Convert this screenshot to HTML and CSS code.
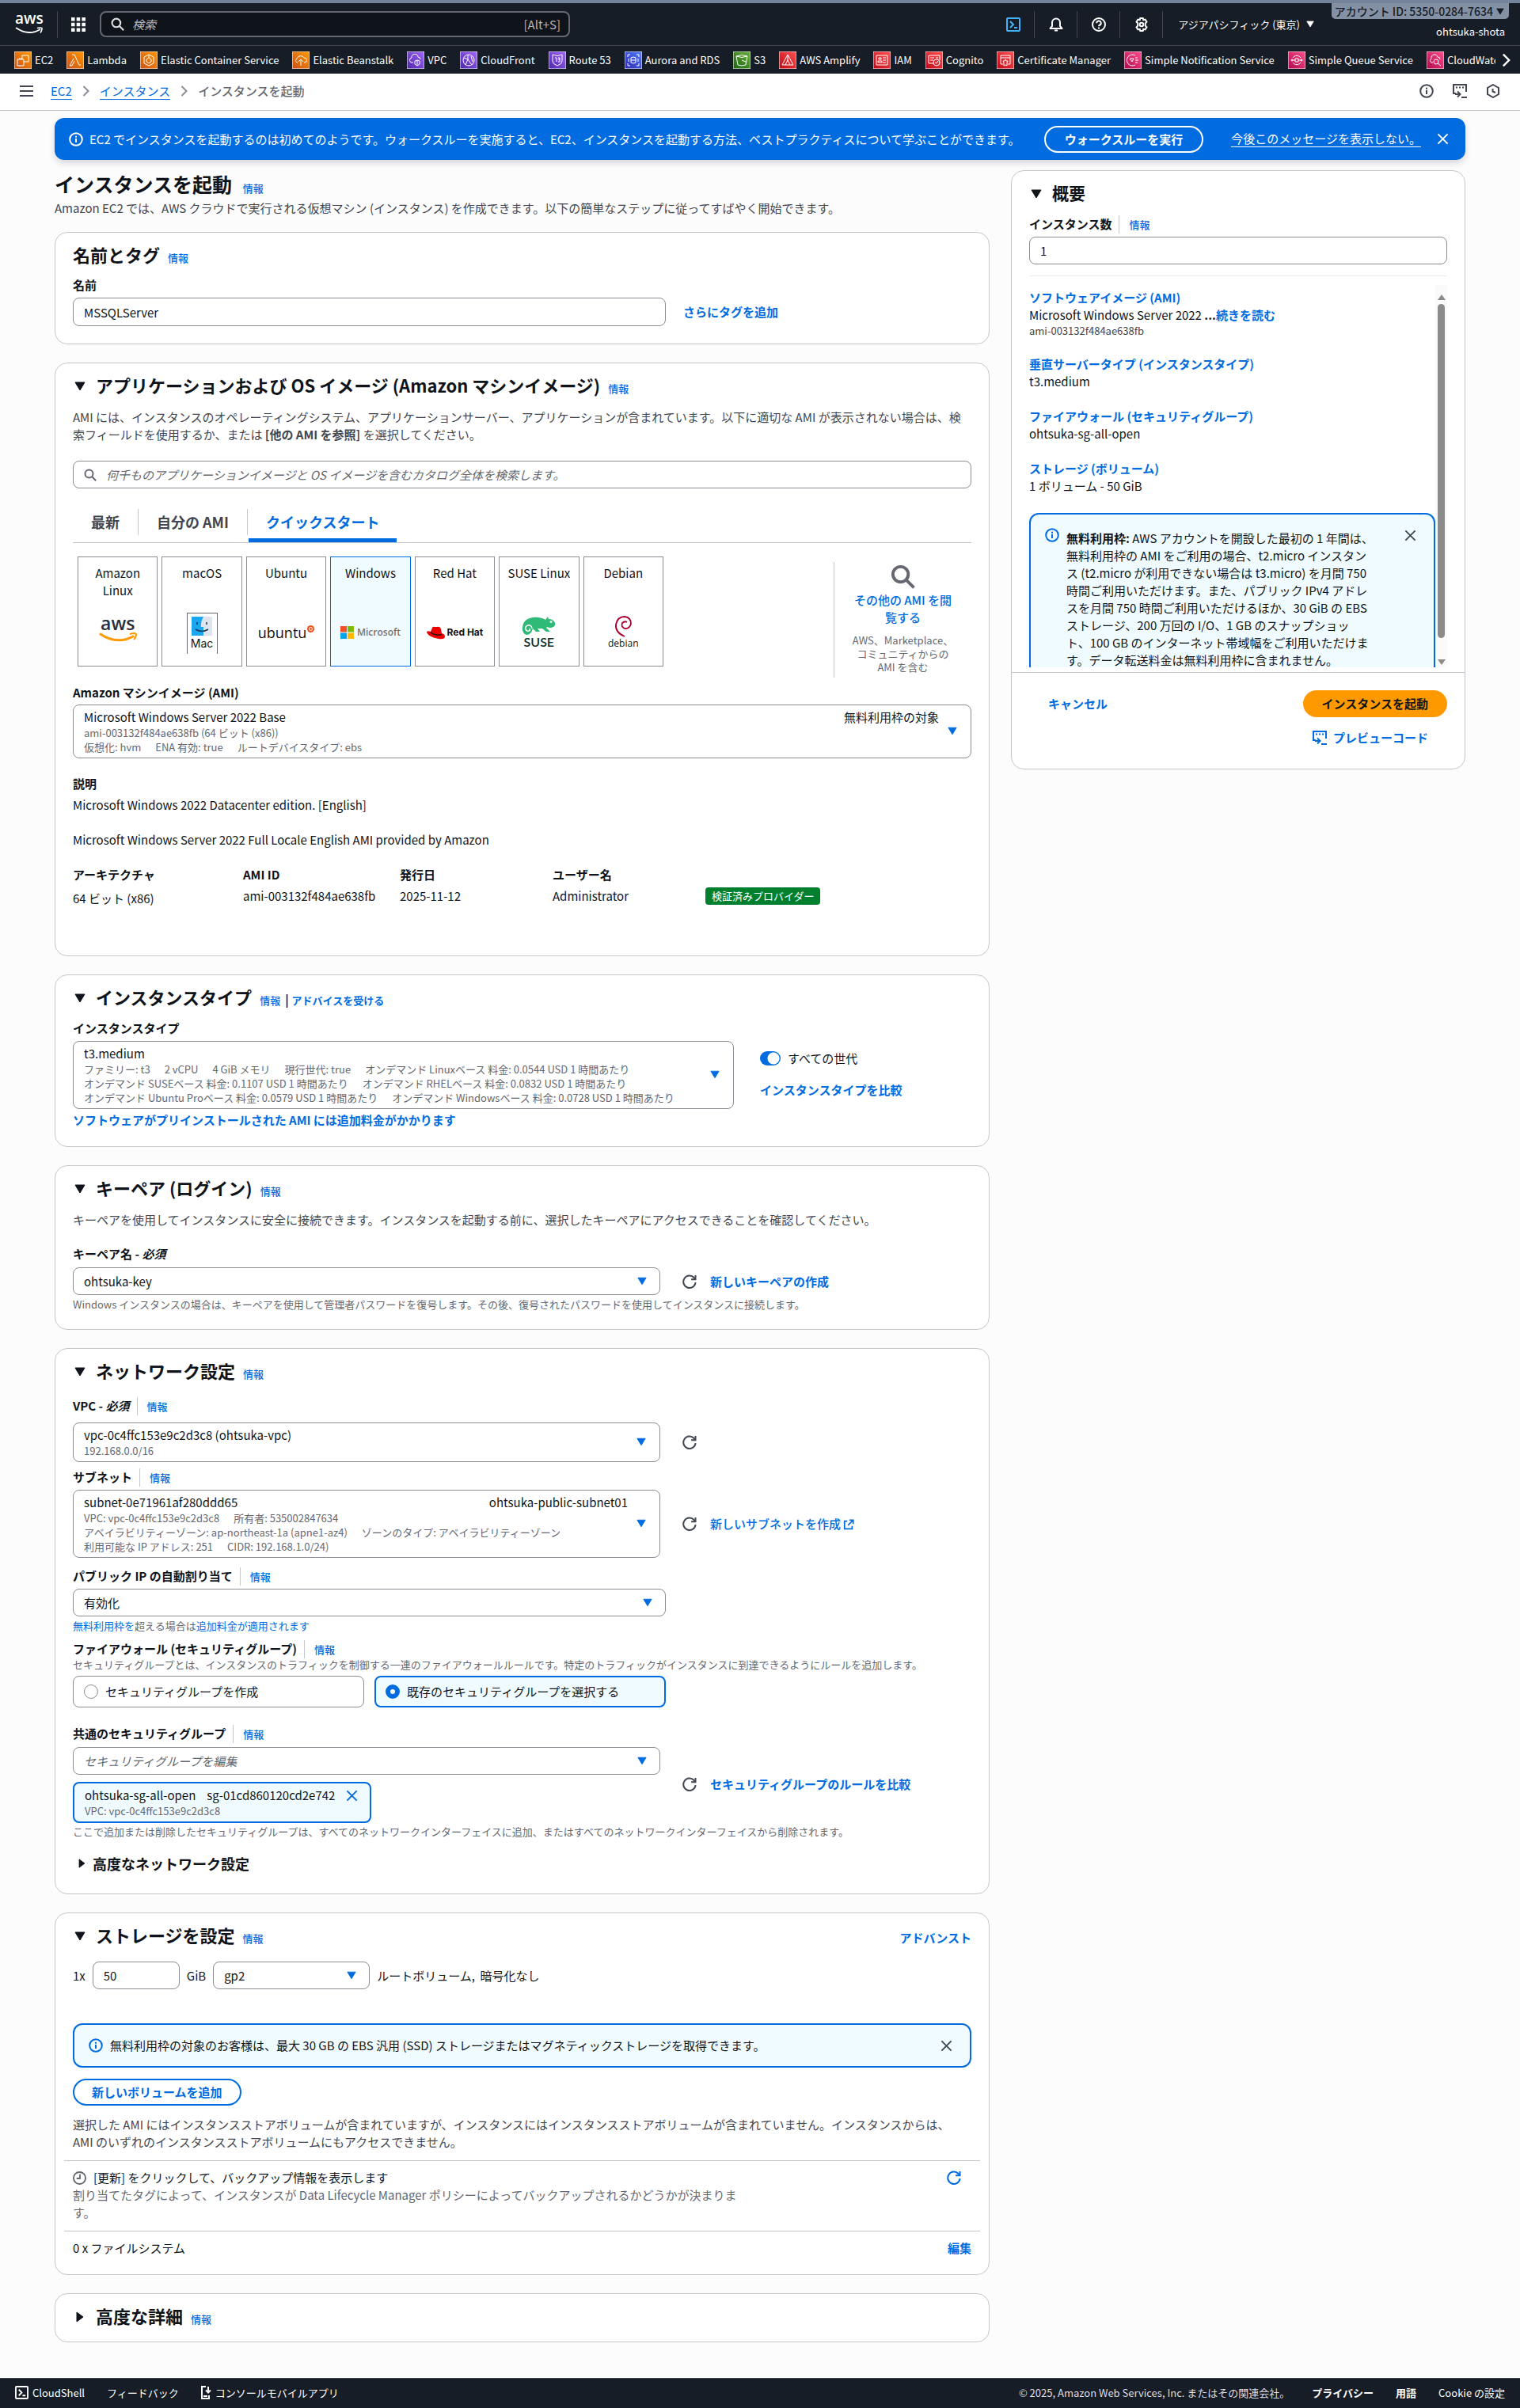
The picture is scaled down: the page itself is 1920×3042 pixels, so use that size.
FILE: index.html
```html
<!DOCTYPE html>
<html lang="ja">
<head>
<meta charset="utf-8">
<title>インスタンスを起動 | EC2</title>
<meta name="viewport" content="width=device-width, initial-scale=1">
<link rel="stylesheet" href="styles.css">
</head>
<body>
<svg class="defs" aria-hidden="true">
  <defs>
    <linearGradient id="g-orange" x1="0" y1="1" x2="1" y2="0"><stop offset="0" stop-color="#c8511b"/><stop offset="1" stop-color="#ff9900"/></linearGradient>
    <linearGradient id="g-purple" x1="0" y1="1" x2="1" y2="0"><stop offset="0" stop-color="#4d27a8"/><stop offset="1" stop-color="#a166ff"/></linearGradient>
    <linearGradient id="g-blue" x1="0" y1="1" x2="1" y2="0"><stop offset="0" stop-color="#2e27ad"/><stop offset="1" stop-color="#527fff"/></linearGradient>
    <linearGradient id="g-green" x1="0" y1="1" x2="1" y2="0"><stop offset="0" stop-color="#1b660f"/><stop offset="1" stop-color="#6cae3e"/></linearGradient>
    <linearGradient id="g-red" x1="0" y1="1" x2="1" y2="0"><stop offset="0" stop-color="#bd0816"/><stop offset="1" stop-color="#ff5252"/></linearGradient>
    <linearGradient id="g-pink" x1="0" y1="1" x2="1" y2="0"><stop offset="0" stop-color="#b0084d"/><stop offset="1" stop-color="#ff4f8b"/></linearGradient>
  </defs>
  <symbol id="i-down" viewBox="0 0 14 12"><path d="M1 1h12L7 11z" fill="currentColor" stroke="currentColor" stroke-linejoin="round"/></symbol>
  <symbol id="i-right" viewBox="0 0 10 14"><path d="M1 1v12l8-6z" fill="currentColor" stroke="currentColor" stroke-linejoin="round"/></symbol>
  <symbol id="i-search" viewBox="0 0 16 16"><g fill="none" stroke="currentColor" stroke-width="2"><circle cx="6.5" cy="6.5" r="5"/><path d="M10.3 10.3l4.9 4.9"/></g></symbol>
  <symbol id="i-info" viewBox="0 0 18 18"><g fill="none" stroke="currentColor" stroke-width="2"><circle cx="9" cy="9" r="7.8"/><path d="M9 8v5M9 4.8v2"/></g></symbol>
  <symbol id="i-close" viewBox="0 0 16 16"><path d="M1.5 1.5l13 13m0-13l-13 13" fill="none" stroke="currentColor" stroke-width="2"/></symbol>
  <symbol id="i-refresh" viewBox="0 0 18 18"><g fill="none" stroke="currentColor" stroke-width="2"><path d="M16.6 10.2A7.7 7.7 0 1 1 14.6 4l1.6 1.6"/><path d="M16.5 1v5.3h-5.4"/></g></symbol>
  <symbol id="i-chev" viewBox="0 0 9 14"><path d="M1.5 1l6 6-6 6" fill="none" stroke="currentColor" stroke-width="2"/></symbol>
  <symbol id="i-code" viewBox="0 0 20 20"><g fill="none" stroke="currentColor" stroke-width="2"><path d="M5 13H2V2h16v9"/><path d="M5 5.5h2m2 0h2m2 0h2"/><path d="M4 14h6M7 10.500l3.500 3.500L7 17.500M12 18h7"/></g></symbol>
  <symbol id="i-ext" viewBox="0 0 16 16"><g fill="none" stroke="currentColor" stroke-width="2"><path d="M6 3H2v11h11v-4M9 1.5h5.5V7M14 2L7 9"/></g></symbol>
</svg>

<header class="top">
  <div class="topbar">
    <a class="aws" href="#" aria-label="AWS"><span>aws</span>
      <svg width="36" height="10" viewBox="0 0 36 10"><path d="M1 1q16 11 31 2" fill="none" stroke="#fff" stroke-width="2"/><path d="M28 1.500q5-1 6 0 .5 2-2 6" fill="none" stroke="#fff" stroke-width="1.500"/></svg>
    </a>
    <button class="apps" aria-label="サービス"><svg width="18" height="18" viewBox="0 0 18 18" fill="#fff"><path d="M0 0h4.500v4.500H0zM6.700 0h4.500v4.500H6.700zM13.400 0H18v4.500h-4.600zM0 6.700h4.500v4.500H0zM6.700 6.700h4.500v4.500H6.700zM13.400 6.700H18v4.500h-4.600zM0 13.400h4.500V18H0zM6.700 13.400h4.500V18H6.700zM13.400 13.400H18V18h-4.600z"/></svg></button>
    <label class="gsearch"><svg width="17" height="17"><use href="#i-search"/></svg><input type="search" placeholder="検索" aria-label="検索"><span>[Alt+S]</span></label>
    <div class="tools">
      <button aria-label="CloudShell"><svg width="18" height="18" viewBox="0 0 18 18" fill="none" stroke="#42b4ff" stroke-width="2"><rect x="1" y="1" width="16" height="16" rx="1"/><path d="M5 5l4 4-4 4M10 13h4"/></svg></button>
      <button aria-label="通知"><svg width="18" height="18" viewBox="0 0 18 18" fill="none" stroke="#fff" stroke-width="2"><path d="M1.500 14h15L14 11V6.500a5 5 0 0 0-10 0V11z" stroke-linejoin="round"/><path d="M7 16.500h4"/></svg></button>
      <button aria-label="ヘルプ"><svg width="18" height="18" viewBox="0 0 18 18" fill="none" stroke="#fff" stroke-width="2"><circle cx="9" cy="9" r="8"/><path d="M6.300 7.200a2.700 2.700 0 1 1 4 2.300Q9 10.200 9 11.200M9 12.600v2"/></svg></button>
      <button aria-label="設定"><svg width="18" height="18" viewBox="0 0 18 18" fill="none" stroke="#fff" stroke-width="2"><path d="M7.300 1h3.400l.6 2.300 2.300-.7 1.900 3-1.700 1.800v3.200l1.700 1.800-1.900 3-2.300-.7-.6 2.300H7.300l-.6-2.300-2.300.7-1.900-3 1.700-1.800V7.400L2.500 5.600l1.900-3 2.300.7z"/><circle cx="9" cy="9" r="2.300"/></svg></button>
      <button class="region">アジアパシフィック (東京)<svg width="10" height="9"><use href="#i-down"/></svg></button>
    </div>
    <div class="account"><button>アカウント ID: 5350-0284-7634<svg width="10" height="9"><use href="#i-down"/></svg></button><span>ohtsuka-shota</span></div>
  </div>
  <nav class="services" aria-label="お気に入り">
    <ul>
      <li><a href="#"><svg viewBox="0 0 22 22"><rect width="22" height="22" rx="1" fill="url(#g-orange)"/><path d="M4 10h8v8H4zM10 10V5h8v8h-6M7 10V8M9 10V8M7 18v1"/></svg>EC2</a></li>
      <li><a href="#"><svg viewBox="0 0 22 22"><rect width="22" height="22" rx="1" fill="url(#g-orange)"/><path d="M7 4h3l6 13h2M9 9l-5 9h3l3-6"/></svg>Lambda</a></li>
      <li><a href="#"><svg viewBox="0 0 22 22"><rect width="22" height="22" rx="1" fill="url(#g-orange)"/><path d="M11 4l6 3v8l-6 3-6-3V7zM11 8l3 2v3l-3 2-3-2v-3zM11 4v4"/></svg>Elastic Container Service</a></li>
      <li><a href="#"><svg viewBox="0 0 22 22"><rect width="22" height="22" rx="1" fill="url(#g-orange)"/><path d="M7 14H6a3 3 0 0 1 0-5 5 5 0 0 1 9-1 3 3 0 0 1 1 6h-1M11 18v-8l-3 3M11 10l3 3"/></svg>Elastic Beanstalk</a></li>
      <li><a href="#"><svg viewBox="0 0 22 22"><rect width="22" height="22" rx="1" fill="url(#g-purple)"/><path d="M8 14H7a3 3 0 0 1-1-6 4 4 0 0 1 8-1 3 3 0 0 1 3 3M10 12l3-1 3 1v4l-3 2-3-2zM13 11v7"/></svg>VPC</a></li>
      <li><a href="#"><svg viewBox="0 0 22 22"><rect width="22" height="22" rx="1" fill="url(#g-purple)"/><circle cx="11" cy="11" r="7"/><path d="M5 8l5 2 5 7M10 4v6l-3 7M14 6l2 7"/></svg>CloudFront</a></li>
      <li><a href="#"><svg viewBox="0 0 22 22"><rect width="22" height="22" rx="1" fill="url(#g-purple)"/><path d="M5 4q6 3 12 0v8q0 4-6 6-6-2-6-6zM8 8h2v5M12 8h2v5h-2M12 10h2"/></svg>Route 53</a></li>
      <li><a href="#"><svg viewBox="0 0 22 22"><rect width="22" height="22" rx="1" fill="url(#g-blue)"/><path d="M4 7V4h3M15 4h3v3M4 15v3h3M15 18h3v-3M8 8q3-2 6 0v6q-3 2-6 0zM8 11h6M5 9v4M17 9v4"/></svg>Aurora and RDS</a></li>
      <li><a href="#"><svg viewBox="0 0 22 22"><rect width="22" height="22" rx="1" fill="url(#g-green)"/><path d="M4 6q7-3 14 0l-2 11q-5 2-10 0zM4 6q7 3 14 0M11 11l5 2"/></svg>S3</a></li>
      <li><a href="#"><svg viewBox="0 0 22 22"><rect width="22" height="22" rx="1" fill="url(#g-red)"/><path d="M11 4L4 17h4l3-6 3 6h4zM11 4v7M8 17h6"/></svg>AWS Amplify</a></li>
      <li><a href="#"><svg viewBox="0 0 22 22"><rect width="22" height="22" rx="1" fill="url(#g-red)"/><path d="M4 5h14v12H4zM7 8h3v2H7zM12 8h4M12 11h4M6 14h5v-2H6zM12 14h4"/></svg>IAM</a></li>
      <li><a href="#"><svg viewBox="0 0 22 22"><rect width="22" height="22" rx="1" fill="url(#g-red)"/><path d="M10 15H4V5h14v6M6 8h5M6 11h4M13 8h3"/><circle cx="14" cy="14" r="4"/><path d="M12 14l2 1 2-3"/></svg>Cognito</a></li>
      <li><a href="#"><svg viewBox="0 0 22 22"><rect width="22" height="22" rx="1" fill="url(#g-red)"/><path d="M8 16H5V5h12v11h-3M5 8h12M11 10l1 2h2l-1 2v4l-2-1-2 1v-4l-1-2h2z"/></svg>Certificate Manager</a></li>
      <li><a href="#"><svg viewBox="0 0 22 22"><rect width="22" height="22" rx="1" fill="url(#g-pink)"/><path d="M14 5a7 7 0 1 0 0 12M7 9h5l-2 4zM14 8h3M14 11h4M14 14h3"/></svg>Simple Notification Service</a></li>
      <li><a href="#"><svg viewBox="0 0 22 22"><rect width="22" height="22" rx="1" fill="url(#g-pink)"/><path d="M6 8a6 6 0 0 1 10 0M6 14a6 6 0 0 0 10 0M9 9h4v4H9zM4 11h5M13 11h5"/><circle cx="5" cy="11" r="1"/><circle cx="17" cy="11" r="1"/></svg>Simple Queue Service</a></li>
      <li><a href="#"><svg viewBox="0 0 22 22"><rect width="22" height="22" rx="1" fill="url(#g-pink)"/><path d="M8 14H6a3 3 0 0 1 0-5 4 4 0 0 1 8-2 3 3 0 0 1 3 3"/><circle cx="12" cy="13" r="3"/><path d="M14 15l4 3"/></svg>CloudWatch</a></li>
    </ul>
    <button aria-label="次へ"><svg width="11" height="18"><use href="#i-chev"/></svg></button>
  </nav>
</header>

<div class="crumbs">
  <button aria-label="メニュー"><svg width="17" height="14" viewBox="0 0 17 14"><path d="M0 1h17M0 7h17M0 13h17" stroke="#424650" stroke-width="2"/></svg></button>
  <nav aria-label="パンくず"><a href="#">EC2</a><svg width="9" height="14"><use href="#i-chev"/></svg><a href="#">インスタンス</a><svg width="9" height="14"><use href="#i-chev"/></svg><span>インスタンスを起動</span></nav>
  <div class="panels">
    <button aria-label="情報"><svg width="18" height="18"><use href="#i-info"/></svg></button>
    <button aria-label="コード"><svg width="20" height="20"><use href="#i-code"/></svg></button>
    <button aria-label="履歴"><svg width="18" height="18" viewBox="0 0 18 18" fill="none" stroke="currentColor" stroke-width="2"><path d="M9 1l7 4v8l-7 4-7-4V5z"/><path d="M8.500 6v3.500l3.500 1.500"/></svg></button>
  </div>
</div>

<main>
  <div class="banner">
    <svg width="18" height="18"><use href="#i-info"/></svg>
    <p>EC2 でインスタンスを起動するのは初めてのようです。ウォークスルーを実施すると、EC2、インスタンスを起動する方法、ベストプラクティスについて学ぶことができます。</p>
    <button class="walk">ウォークスルーを実行</button>
    <a href="#">今後このメッセージを表示しない。</a>
    <button class="x" aria-label="閉じる"><svg width="15" height="15"><use href="#i-close"/></svg></button>
  </div>

  <div class="columns">
    <div class="left">
      <div class="intro">
        <h1>インスタンスを起動 <a class="info" href="#">情報</a></h1>
        <p>Amazon EC2 では、AWS クラウドで実行される仮想マシン (インスタンス) を作成できます。以下の簡単なステップに従ってすばやく開始できます。</p>
      </div>

      <section class="card c-name">
        <h2>名前とタグ <a class="info" href="#">情報</a></h2>
        <label class="lbl" for="name">名前</label>
        <div class="row"><input class="box w66" id="name" value="MSSQLServer"><a class="b" href="#">さらにタグを追加</a></div>
      </section>

      <section class="card c-ami">
        <h2><svg width="14" height="12"><use href="#i-down"/></svg>アプリケーションおよび OS イメージ (Amazon マシンイメージ) <a class="info" href="#">情報</a></h2>
        <p class="desc">AMI には、インスタンスのオペレーティングシステム、アプリケーションサーバー、アプリケーションが含まれています。以下に適切な AMI が表示されない場合は、検索フィールドを使用するか、または <b>[他の AMI を参照]</b> を選択してください。</p>
        <label class="box amisearch"><svg width="16" height="16"><use href="#i-search"/></svg><input type="search" aria-label="AMI を検索" placeholder="何千ものアプリケーションイメージと OS イメージを含むカタログ全体を検索します。"></label>
        <div class="tabs" role="tablist"><button role="tab">最新</button><button role="tab">自分の AMI</button><button role="tab" aria-selected="true">クイックスタート</button></div>
        <div class="osrow">
          <div class="tiles">
            <button><span>Amazon Linux</span><i class="lg-aws">aws<svg width="48" height="12" viewBox="0 0 48 12"><path d="M1 1.500q22 15 43 3" fill="none" stroke="#f90" stroke-width="3"/><path d="M39 2q7-2 8 0 0 4-3 7" fill="none" stroke="#f90" stroke-width="2"/></svg></i></button>
            <button><span>macOS</span><i class="lg-mac"><svg width="26" height="24" viewBox="0 0 26 24"><path d="M0 0h26v24H0z" fill="#dfe5ee"/><path d="M0 0h15q-4 7-3 13h3v11H0z" fill="#1ba7ef"/><path d="M7 7v3M19 7v3M5 16q8 5 16 0" fill="none" stroke="#1c3557" stroke-width="1.500"/></svg>Mac</i></button>
            <button><span>Ubuntu</span><i class="lg-ubuntu">ubuntu<svg width="9" height="9" viewBox="0 0 9 9"><circle cx="4.500" cy="4.500" r="4.500" fill="#e95420"/><circle cx="4.500" cy="4.500" r="2" fill="none" stroke="#fff"/></svg></i></button>
            <button class="on"><span>Windows</span><i class="lg-ms"><svg width="17" height="16" viewBox="0 0 17 16"><path d="M0 0h8v7.500H0z" fill="#f25022"/><path d="M9 0h8v7.500H9z" fill="#7fba00"/><path d="M0 8.500h8V16H0z" fill="#00a4ef"/><path d="M9 8.500h8V16H9z" fill="#ffb900"/></svg>Microsoft</i></button>
            <button><span>Red Hat</span><i class="lg-rh"><svg width="23" height="17" viewBox="0 0 23 17"><path d="M5 7l2-5q1-2 3-1l3 0q4-1 5 3l1 5q4 1 4 4 0 4-8 3Q3 14 0 8q0-3 5-1z" fill="#e00"/><path d="M5 7q5 5 14 3l0 1.500Q10 13 4.500 8.500z" fill="#111"/></svg>Red Hat</i></button>
            <button><span>SUSE Linux</span><i class="lg-suse"><svg width="43" height="24" viewBox="0 0 43 24"><path d="M1 17Q0 3 14 1q9-1 16 3l3-4 1 3q6 0 8 5 1 3-2 5-4 2-8 0l-1 1 5 5h-5l-5-4h-6l3 4h-5l-4-4q-2 8-8 8Q2 22 1 17z" fill="#30ba78"/><path d="M13 15q-1-5-5-4-4 1-3 5 1 3 4 2 2-1 1-3" fill="none" stroke="#fff" stroke-width="1.500"/><circle cx="37" cy="6.500" r="1.500" fill="#fff"/></svg>SUSE</i></button>
            <button><span>Debian</span><i class="lg-deb"><svg width="22" height="27" viewBox="0 0 22 27"><path d="M13 26Q1 21 2 11 4 1 13 1q8 1 8 9-2 7-8 6-5-2-3-7 3-3 6-1" fill="none" stroke="#a80030" stroke-width="1.800"/></svg>debian</i></button>
          </div>
          <div class="more"><svg width="31" height="31"><use href="#i-search"/></svg><a href="#">その他の AMI を閲<br>覧する</a><small>AWS、Marketplace、<br>コミュニティからの<br>AMI を含む</small></div>
        </div>
        <div class="lbl">Amazon マシンイメージ (AMI)</div>
        <button class="box multi" aria-haspopup="listbox"><span class="t">Microsoft Windows Server 2022 Base<em>無料利用枠の対象</em></span><small>ami-003132f484ae638fb (64 ビット (x86))</small><small><span>仮想化: hvm</span><span>ENA 有効: true</span><span>ルートデバイスタイプ: ebs</span></small><svg width="12" height="11"><use href="#i-down"/></svg></button>
        <div class="lbl about">説明</div>
        <p class="edition">Microsoft Windows 2022 Datacenter edition. [English]</p>
        <p>Microsoft Windows Server 2022 Full Locale English AMI provided by Amazon</p>
        <table>
          <thead><tr><th>アーキテクチャ</th><th>AMI ID</th><th>発行日</th><th>ユーザー名</th><td></td></tr></thead>
          <tbody><tr><td class="arch">64 ビット (x86)</td><td>ami-003132f484ae638fb</td><td>2025-11-12</td><td>Administrator</td><td><mark>検証済みプロバイダー</mark></td></tr></tbody>
        </table>
      </section>

      <section class="card c-type">
        <h2><svg width="14" height="12"><use href="#i-down"/></svg>インスタンスタイプ <a class="info" href="#">情報</a><span class="bar">|</span><a class="info adv" href="#">アドバイスを受ける</a></h2>
        <div class="lbl">インスタンスタイプ</div>
        <div class="row">
          <button class="box multi" aria-haspopup="listbox"><span class="t">t3.medium</span><small><span>ファミリー: t3</span><span>2 vCPU</span><span>4 GiB メモリ</span><span>現行世代: true</span><span>オンデマンド Linuxベース 料金: 0.0544 USD 1 時間あたり</span></small><small><span>オンデマンド SUSEベース 料金: 0.1107 USD 1 時間あたり</span><span>オンデマンド RHELベース 料金: 0.0832 USD 1 時間あたり</span></small><small><span>オンデマンド Ubuntu Proベース 料金: 0.0579 USD 1 時間あたり</span><span>オンデマンド Windowsベース 料金: 0.0728 USD 1 時間あたり</span></small><svg width="12" height="11"><use href="#i-down"/></svg></button>
          <div class="side"><label class="toggle"><input type="checkbox" checked>すべての世代</label><a class="b" href="#">インスタンスタイプを比較</a></div>
        </div>
        <a class="b note" href="#">ソフトウェアがプリインストールされた AMI には追加料金がかかります</a>
      </section>

      <section class="card c-key">
        <h2><svg width="14" height="12"><use href="#i-down"/></svg>キーペア (ログイン) <a class="info" href="#">情報</a></h2>
        <p class="desc">キーペアを使用してインスタンスに安全に接続できます。インスタンスを起動する前に、選択したキーペアにアクセスできることを確認してください。</p>
        <label class="lbl" for="key">キーペア名 - <i>必須</i></label>
        <div class="row field"><span class="sel"><select class="box" id="key"><option>ohtsuka-key</option></select><svg width="12" height="11"><use href="#i-down"/></svg></span><button class="re" aria-label="更新"><svg width="18" height="18"><use href="#i-refresh"/></svg></button><a class="b" href="#">新しいキーペアの作成</a></div>
        <p class="hint">Windows インスタンスの場合は、キーペアを使用して管理者パスワードを復号します。その後、復号されたパスワードを使用してインスタンスに接続します。</p>
      </section>

      <section class="card c-net">
        <h2><svg width="14" height="12"><use href="#i-down"/></svg>ネットワーク設定 <a class="info" href="#">情報</a></h2>
        <div class="lbl l-vpc">VPC - <i>必須</i><a class="info sep" href="#">情報</a></div>
        <div class="row field"><button class="box multi" aria-haspopup="listbox"><span class="t">vpc-0c4ffc153e9c2d3c8 (ohtsuka-vpc)</span><small>192.168.0.0/16</small><svg width="12" height="11"><use href="#i-down"/></svg></button><button class="re" aria-label="更新"><svg width="18" height="18"><use href="#i-refresh"/></svg></button></div>
        <div class="lbl l-sub">サブネット<a class="info sep" href="#">情報</a></div>
        <div class="row field"><button class="box multi" aria-haspopup="listbox"><span class="t">subnet-0e71961af280ddd65<em>ohtsuka-public-subnet01</em></span><small><span>VPC: vpc-0c4ffc153e9c2d3c8</span><span>所有者: 535002847634</span></small><small><span>アベイラビリティーゾーン: ap-northeast-1a (apne1-az4)</span><span>ゾーンのタイプ: アベイラビリティーゾーン</span></small><small><span>利用可能な IP アドレス: 251</span><span>CIDR: 192.168.1.0/24)</span></small><svg width="12" height="11"><use href="#i-down"/></svg></button><button class="re" aria-label="更新"><svg width="18" height="18"><use href="#i-refresh"/></svg></button><a class="m" href="#">新しいサブネットを作成 <svg width="14" height="14"><use href="#i-ext"/></svg></a></div>
        <div class="lbl l-ip"><label for="ip">パブリック IP の自動割り当て</label><a class="info sep" href="#">情報</a></div>
        <span class="sel w66"><select class="box" id="ip"><option>有効化</option></select><svg width="12" height="11"><use href="#i-down"/></svg></span>
        <p class="hint"><a href="#">無料利用枠</a><a href="#">を</a>超える場合は<a href="#">追加料金が適用されます</a></p>
        <div class="lbl l-fw">ファイアウォール (セキュリティグループ)<a class="info sep" href="#">情報</a></div>
        <p class="hint flush">セキュリティグループとは、インスタンスのトラフィックを制御する一連のファイアウォールルールです。特定のトラフィックがインスタンスに到達できるようにルールを追加します。</p>
        <div class="radios w66"><label><input type="radio" name="sg">セキュリティグループを作成</label><label class="on"><input type="radio" name="sg" checked>既存のセキュリティグループを選択する</label></div>
        <div class="row field sgrow">
          <div class="sgcol">
            <div class="lbl"><label for="sg">共通のセキュリティグループ</label><a class="info sep" href="#">情報</a></div>
            <span class="sel"><select class="box ph" id="sg"><option>セキュリティグループを編集</option></select><svg width="12" height="11"><use href="#i-down"/></svg></span>
            <div class="token"><div><span>ohtsuka-sg-all-open</span><span>sg-01cd860120cd2e742</span><button aria-label="削除"><svg width="15" height="15"><use href="#i-close"/></svg></button></div><small>VPC: vpc-0c4ffc153e9c2d3c8</small></div>
          </div>
          <div class="row field compare"><button class="re" aria-label="更新"><svg width="18" height="18"><use href="#i-refresh"/></svg></button><a class="b" href="#">セキュリティグループのルールを比較</a></div>
        </div>
        <p class="hint">ここで追加または削除したセキュリティグループは、すべてのネットワークインターフェイスに追加、またはすべてのネットワークインターフェイスから削除されます。</p>
        <h3><svg width="9" height="12"><use href="#i-right"/></svg>高度なネットワーク設定</h3>
      </section>

      <section class="card c-vol">
        <h2><svg width="14" height="12"><use href="#i-down"/></svg>ストレージを設定 <a class="info" href="#">情報</a><a class="b end" href="#">アドバンスト</a></h2>
        <div class="volume"><label for="size">1x</label><input class="box" id="size" value="50"><label for="vt">GiB</label><span class="sel"><select class="box" id="vt"><option>gp2</option></select><svg width="12" height="11"><use href="#i-down"/></svg></span><span>ルートボリューム,&nbsp; 暗号化なし</span></div>
        <div class="alert"><svg width="18" height="18"><use href="#i-info"/></svg><p>無料利用枠の対象のお客様は、最大 30 GB の EBS 汎用 (SSD) ストレージまたはマグネティックストレージを取得できます。</p><button aria-label="閉じる"><svg width="15" height="15"><use href="#i-close"/></svg></button></div>
        <button class="pill">新しいボリュームを追加</button>
        <p class="desc">選択した AMI にはインスタンスストアボリュームが含まれていますが、インスタンスにはインスタンスストアボリュームが含まれていません。インスタンスからは、AMI のいずれのインスタンスストアボリュームにもアクセスできません。</p>
        <hr>
        <div class="backup"><div><p><svg width="17" height="17" viewBox="0 0 18 18" fill="none" stroke="#656871" stroke-width="2"><circle cx="9" cy="9" r="8"/><path d="M9.500 4v5.500H5"/></svg>[更新] をクリックして、バックアップ情報を表示します</p><p class="g">割り当てたタグによって、インスタンスが Data Lifecycle Manager ポリシーによってバックアップされるかどうかが決まります。</p></div><button class="re" aria-label="更新"><svg width="18" height="18"><use href="#i-refresh"/></svg></button></div>
        <hr>
        <div class="fs"><span>0 x ファイルシステム</span><a class="b" href="#">編集</a></div>
      </section>

      <section class="card c-adv">
        <h2><svg width="14" height="14"><use href="#i-right"/></svg>高度な詳細 <a class="info" href="#">情報</a></h2>
      </section>
    </div>

    <aside class="card summary">
      <h2><svg width="14" height="12"><use href="#i-down"/></svg>概要</h2>
      <div class="lbl"><label for="count">インスタンス数</label><a class="info sep" href="#">情報</a></div>
      <input class="box" id="count" value="1">
      <div class="scroll">
        <div class="body">
          <dl>
            <dt><a href="#">ソフトウェアイメージ (AMI)</a></dt><dd>Microsoft Windows Server 2022 <b>...<a href="#">続きを読む</a></b></dd><dd class="s">ami-003132f484ae638fb</dd>
            <dt><a href="#">垂直サーバータイプ (インスタンスタイプ)</a></dt><dd>t3.medium</dd>
            <dt><a href="#">ファイアウォール (セキュリティグループ)</a></dt><dd>ohtsuka-sg-all-open</dd>
            <dt><a href="#">ストレージ (ボリューム)</a></dt><dd>1 ボリューム - 50 GiB</dd>
          </dl>
          <div class="alert free"><svg width="18" height="18"><use href="#i-info"/></svg><p><b>無料利用枠:</b> AWS アカウントを開設した最初の 1 年間は、<br>無料利用枠の AMI をご利用の場合、t2.micro インスタン<br>ス (t2.micro が利用できない場合は t3.micro) を月間 750<br>時間ご利用いただけます。また、パブリック IPv4 アドレ<br>スを月間 750 時間ご利用いただけるほか、30 GiB の EBS<br>ストレージ、200 万回の I/O、1 GB のスナップショッ<br>ト、100 GB のインターネット帯域幅をご利用いただけま<br>す。データ転送料金は無料利用枠に含まれません。</p><button aria-label="閉じる"><svg width="15" height="15"><use href="#i-close"/></svg></button></div>
        </div>
        <div class="track" aria-hidden="true"><svg width="10" height="7" viewBox="0 0 10 7"><path d="M5 0l5 7H0z" fill="#8b8b8b"/></svg><span></span><svg width="10" height="7" viewBox="0 0 10 7"><path d="M5 7l5-7H0z" fill="#8b8b8b"/></svg></div>
      </div>
      <div class="actions">
        <div><button class="link">キャンセル</button><button class="primary">インスタンスを起動</button></div>
        <button class="link preview"><svg width="20" height="20"><use href="#i-code"/></svg>プレビューコード</button>
      </div>
    </aside>
  </div>
</main>

<footer>
  <a href="#"><svg width="17" height="17" viewBox="0 0 18 18" fill="none" stroke="#fff" stroke-width="2"><rect x="1" y="1" width="16" height="16" rx="1"/><path d="M5 5l4 4-4 4M10 13h4"/></svg>CloudShell</a>
  <a href="#">フィードバック</a>
  <a href="#"><svg width="13" height="17" viewBox="0 0 13 17" fill="none" stroke="#fff" stroke-width="2"><path d="M6 1H1v15h9v-4M3 13h5M9 1v7M6 5.500L9 8.500l3-3"/></svg>コンソールモバイルアプリ</a>
  <span class="copy">© 2025, Amazon Web Services, Inc. またはその関連会社。</span>
  <a href="#"><b>プライバシー</b></a>
  <a href="#"><b>用語</b></a>
  <a href="#">Cookie の設定</a>
</footer>
</body>
</html>
```

FILE: styles.css
```css
* { box-sizing: border-box; }
body {
  display: flex;
  flex-direction: column;
  min-height: 100vh;
  margin: 0;
  background: #fcfcfd;
  color: #0f141a;
  font: 15px/22px "Noto Sans CJK JP", "Noto Sans", sans-serif;
}
p, h1, h2, h3, ul, dl, dd { margin: 0; padding: 0; }
button, input, select { font: inherit; color: inherit; }
button { background: none; border: 0; padding: 0; text-align: inherit; }
a { color: #006ce0; text-decoration: none; }
svg { flex: none; display: block; }
.defs { position: absolute; width: 0; height: 0; }

/* global header */
.top { background: #161d26; color: #fff; border-top: 4px solid #75839a; }
.topbar { display: flex; align-items: center; height: 54px; border-bottom: 1px solid #424650; }
.aws { width: 73px; height: 34px; border-right: 1px solid #424650; padding: 1px 0 0 19px; color: #fff; font: 600 19px/16px "Open Sans", sans-serif; }
.aws span { display: block; }
.aws svg { margin-top: 3px; }
.apps { margin: 0 18px 0 17px; }
.gsearch { display: flex; align-items: center; width: 594px; height: 33px; border: 2px solid #656871; border-radius: 8px; background: #0f141a; padding: 0 10px 0 12px; color: #b4b4bb; }
.gsearch svg { color: #dedee3; }
.gsearch input { flex: 1; min-width: 0; margin-left: 10px; border: 0; padding: 0; background: none; outline: 0; }
::placeholder { color: inherit; font-style: italic; opacity: 1; }
.tools { display: flex; align-items: center; margin-left: auto; }
.tools button { display: grid; place-items: center; width: 54px; height: 34px; border-right: 1px solid #424650; }
.tools .region { display: flex; align-items: center; gap: 8px; width: auto; border: 0; padding-left: 19px; font-size: 13px; }
.account { display: flex; flex-direction: column; align-items: flex-end; align-self: flex-start; width: 234px; margin: 0 14px 0 12px; font-size: 13px; }
.account button { display: flex; align-items: center; gap: 4px; height: 20px; padding: 0 6px 0 4px; border-radius: 0 0 5px 5px; background: #8491a5; color: #161d26; font-weight: 500; font-size: 14px; line-height: 20px; }
.account span { margin: 5px 5px 0 0; }
.services { display: flex; align-items: center; height: 35px; padding: 0 12px 0 18px; }
.services ul { display: flex; gap: 17px; flex: 1; min-width: 0; overflow: hidden; list-style: none; font-size: 13px; white-space: nowrap; }
.services a { display: flex; align-items: center; gap: 4px; color: #fff; }
.services a svg { width: 22px; height: 22px; fill: none; stroke: #fff; stroke-width: 1; }
.services button { margin-left: 8px; }

.crumbs { display: flex; align-items: center; height: 47px; padding: 0 25px 2px; border-bottom: 1px solid #c6c6cd; background: #fff; color: #424650; }
.crumbs nav { display: flex; align-items: center; gap: 13px; margin-left: 22px; }
.crumbs nav a { border-bottom: 1px solid #006ce0; line-height: 20px; }
.crumbs nav svg { color: #8c8c94; }
.crumbs nav span { color: #656871; font-weight: 500; }
.panels { display: flex; gap: 23px; margin-left: auto; }

/* page */
main { flex: 1 0 auto; padding: 9px 69px 45px; }
.banner { display: flex; align-items: center; height: 53px; padding: 0 21px 0 18px; border-radius: 12px; background: #006ce0; color: #fff; box-shadow: 0 4px 8px #00071626; }
.banner p { flex: 1; margin-left: 8px; white-space: nowrap; }
.banner .walk { height: 34px; padding: 0 24px; border: 2px solid #fff; border-radius: 17px; font-weight: 700; }
.banner a { margin: 0 20px 0 35px; border-bottom: 1px solid #fff; line-height: 20px; color: #fff; }
.columns { display: grid; grid-template-columns: minmax(0, 1fr) 574px; gap: 27px; align-items: start; margin-top: 13px; }
.left { display: grid; gap: 23px; }
.intro { margin-bottom: -4px; }
h1 { font-size: 25px; line-height: 34px; margin-bottom: 3px; }
.intro p, .desc { color: #424650; }
.info { font-size: 13px; line-height: 14px; font-weight: 500; margin-left: 8px; }
.sep { margin-left: 9px; padding: 2px 0 2px 12px; border-left: 1px solid #c6c6cd; }
.card { min-width: 0; padding: 13px 22px 22px; border: 1px solid #c6c6cd; border-radius: 16px; background: #fff; }
h2 { display: flex; align-items: baseline; padding-bottom: 2px; font-size: 22px; line-height: 28px; }
h2 .info { margin-left: 10px; }
h2 > svg { align-self: center; margin: 4px 13px 0 2px; }
.lbl { display: block; font-weight: 700; }
.b { font-weight: 700; }
.m { font-weight: 500; }
.m svg { display: inline-block; vertical-align: -2px; }
.row { display: flex; align-items: center; gap: 22px; }
.w66 { width: 66%; }
.box { display: block; height: 35px; padding: 0 13px; border: 1px solid #8c8c94; border-radius: 8px; background: #fff; outline: 0; }
.multi { position: relative; width: 100%; height: auto; padding: 4px 45px 4px 13px; color: #656871; }
.multi .t { display: flex; justify-content: space-between; color: #0f141a; }
.multi em { font-style: normal; margin-right: -5px; }
.multi small { display: flex; gap: 18px; font-size: 13px; line-height: 18px; white-space: nowrap; }
.multi > svg { position: absolute; right: 17px; top: calc(50% - 6px); color: #006ce0; }
.sel { position: relative; display: block; }
.sel select { width: 100%; appearance: none; }
.sel svg { position: absolute; right: 17px; top: 12px; color: #006ce0; pointer-events: none; }
.ph { font-style: italic; color: #656871; }
.hint { margin-top: 3px; color: #656871; font-size: 13px; line-height: 18px; }
.hint.flush { margin-top: 0; }
.field { gap: 0; }
.field > .sel, .field > .multi, .sgcol { width: 742px; flex: none; }
.re { margin: 0 17px 0 28px; color: #424650; }

.c-name .lbl { margin: 12px 0 5px; }
.c-name .box { height: 36px; }

.c-ami { padding-bottom: 61px; }
.c-ami .desc { margin: 14px 0 22px; }
.amisearch { display: flex; align-items: center; gap: 12px; color: #656871; }
.amisearch input { flex: 1; border: 0; padding: 0; background: none; outline: 0; }
.tabs { display: flex; margin-top: 26px; height: 43px; border-bottom: 1px solid #c6c6cd; color: #424650; font-size: 18px; font-weight: 700; }
.tabs button { height: 33px; padding: 0 23px 2px; border-right: 1px solid #c6c6cd; }
.tabs button[aria-selected] { height: 42px; padding: 0 22px 6px; margin-left: 1px; border: 0; border-bottom: 5px solid #006ce0; color: #006ce0; }
.osrow { display: flex; justify-content: space-between; align-items: flex-start; margin-top: 17px; }
.tiles { display: grid; grid-template-columns: repeat(7, 1fr); gap: 5px; width: 740px; margin-left: 6px; }
.tiles button { display: flex; flex-direction: column; align-items: center; padding: 9px 8px 0; border: 1px solid #8c8c94; text-align: center; }
.tiles button > span { height: 44px; }
.tiles .on { border-color: #006ce0; background: #f0fbff; }
.tiles i { display: flex; align-items: center; justify-content: center; height: 84px; font-style: normal; font-family: "Open Sans", sans-serif; white-space: nowrap; }
.tiles .lg-aws { flex-direction: column; font-size: 23px; line-height: 16px; font-weight: 600; color: #252f3e; gap: 4px; height: 76px; }
.tiles .lg-mac { flex-direction: column; width: 39px; height: 52px; margin-top: 17px; border: 1px solid #656871; border-bottom: 0; font: 14px/20px "Inter", sans-serif; }
.tiles .lg-ubuntu { font: 400 18px/24px "Open Sans", sans-serif; color: #111; }
.lg-ubuntu svg { margin: 0 0 10px 1px; }
.tiles .lg-ms { gap: 4px; font-size: 12px; font-weight: 600; color: #737373; }
.tiles .lg-rh { gap: 3px; font: 700 12px/16px "Inter", sans-serif; color: #111; }
.tiles .lg-suse { flex-direction: column; font: 600 16px/16px "Lato", sans-serif; color: #0c322c; }
.tiles .lg-deb { flex-direction: column; font: 12px/16px "Open Sans", sans-serif; }
.more { display: flex; flex-direction: column; align-items: center; width: 174px; margin-top: 7px; padding-top: 3px; border-left: 1px solid #c6c6cd; color: #656871; text-align: center; }
.more a { margin-top: 3px; font-weight: 500; }
.more small { margin-top: 9px; padding-bottom: 5px; font-size: 13px; line-height: 17px; }
.c-ami > .lbl { margin: 8px 0 4px; }
.c-ami > .about { margin: 21px 0 5px; }
.edition { margin-bottom: 22px; }
table { margin-top: 22px; border-spacing: 0; table-layout: fixed; width: 100%; }
th, td { padding: 0; text-align: left; vertical-align: top; }
th { padding-bottom: 5px; }
th:nth-child(1) { width: 215px; }
th:nth-child(2) { width: 198px; }
th:nth-child(3), th:nth-child(4) { width: 193px; }
.arch { padding-top: 3px; }
mark { display: inline-block; padding: 0 8px; border-radius: 4px; background: #00802f; color: #fff; font-size: 13px; vertical-align: top; }

.bar { margin: 0 4px 0 6px; font-size: 15px; line-height: 20px; }
h2 .adv { margin-left: 0; font-weight: 700; }
.c-type .lbl { margin: 13px 0 5px; }
.c-type .multi { width: 835px; }
.c-type .row { gap: 33px; }
.side { display: grid; gap: 18px; margin-bottom: 3px; }
.toggle { display: flex; align-items: center; gap: 9px; }
.toggle input { appearance: none; width: 26px; height: 18px; margin: 0; border-radius: 9px; background: radial-gradient(circle at 17px 9px, #fff 7px, #006ce0 8px); }
.note { display: block; margin-top: 3px; }

.c-key .desc { margin: 14px 0 21px; }
.c-key .lbl { margin-bottom: 6px; }

.c-net { padding-bottom: 25px; }
.l-vpc { margin: 18px 0 10px; }
.l-sub { margin: 8px 0 5px; }
.l-ip { margin: 12px 0 5px; }
.l-fw { margin-top: 9px; }
.radios { display: grid; grid-template-columns: 1fr 1fr; gap: 13px; margin-top: 5px; }
.radios label { display: flex; align-items: center; gap: 9px; height: 40px; padding: 0 13px; border: 1px solid #8c8c94; border-radius: 8px; }
.radios .on { padding: 0 12px; border: 2px solid #006ce0; background: #f0fbff; }
.radios input { appearance: none; width: 18px; height: 18px; margin: 0; border: 1px solid #8c8c94; border-radius: 50%; background: #fff; }
.radios input:checked { border: 6px solid #006ce0; }
.sgrow { margin-top: 22px; }
.sgcol .sel { margin-top: 6px; }
.compare { padding-top: 26px; }
.token { width: 377px; margin-top: 9px; padding: 4px 13px; border: 2px solid #006ce0; border-radius: 8px; background: #f0fbff; }
.token div { display: flex; align-items: center; gap: 14px; }
.token button { color: #006ce0; }
.token small { display: block; font-size: 13px; line-height: 18px; color: #656871; }
.c-net > .sgrow + .hint { margin-top: 2px; }
h3 { display: flex; align-items: center; gap: 9px; margin: 18px 0 0 7px; font-size: 18px; line-height: 26px; }

.end { margin-left: auto; font-size: 15px; line-height: 20px; }
.volume { display: flex; align-items: center; gap: 9px; margin-top: 18px; }
.volume input { width: 110px; }
.volume .sel { width: 198px; }
.alert { display: flex; align-items: center; padding: 15px 22px 15px 18px; border: 2px solid #006ce0; border-radius: 12px; background: #f0fbff; }
.alert > svg { color: #006ce0; margin-right: 9px; }
.alert p { flex: 1; }
.alert button { color: #424650; }
.c-vol .alert { margin: 43px 0 14px; }
.pill { display: block; height: 34px; padding: 0 22px; border: 2px solid #006ce0; border-radius: 17px; color: #006ce0; font-weight: 700; }
.c-vol .desc { margin-top: 13px; padding-right: 16px; }
hr { margin: 12px -11px 10px; border: 0; border-top: 1px solid #c6c6cd; }
.backup { display: flex; justify-content: space-between; align-items: flex-start; }
.backup > div { width: 75%; }
.backup p { display: flex; align-items: center; gap: 9px; }
.backup .g { display: block; color: #656871; }
.backup .re { margin: 2px 13px 0 0; color: #006ce0; }
.fs { display: flex; justify-content: space-between; }
.c-adv { padding-bottom: 17px; }

.summary { padding-bottom: 28px; }
.summary h2 { margin-bottom: 13px; font-size: 21px; }
.summary > .box { width: 100%; margin: 5px 0 14px; }
.scroll { display: flex; height: 495px; margin-bottom: 6px; padding-top: 11px; border-top: 1px solid #ebebf0; }
.body { flex: 1; overflow: hidden; padding-top: 5px; }
dt { font-weight: 700; margin-top: 22px; }
dt:first-child { margin-top: 0; }
dd.s { font-size: 13px; line-height: 18px; color: #424650; }
.free { margin-top: 23px; align-items: flex-start; padding: 19px 22px 19px 18px; }
.free > svg { margin-top: -2px; }
.track { display: flex; flex-direction: column; align-items: center; width: 15px; padding: 12px 0 3px; background: #fafafa; }
.track span { width: 9px; height: 422px; margin: 5px 0 auto; border-radius: 5px; background: #8b8b8b; }
.actions { margin: 0 -22px; padding: 22px 22px 0; border-top: 1px solid #c6c6cd; }
.actions div { display: flex; align-items: center; justify-content: space-between; }
.link { padding-left: 24px; color: #006ce0; font-weight: 700; }
.primary { height: 34px; padding: 0 24px; border-radius: 17px; background: #f90; font-weight: 700; }
.preview { display: flex; align-items: center; gap: 7px; margin: 15px 24px 0 auto; }

footer { display: flex; align-items: center; gap: 28px; height: 38px; padding: 0 19px 2px; background: #161d26; color: #dedee3; font-size: 13px; border-top: 1px solid #424650; }
footer a { display: flex; align-items: center; gap: 5px; color: #fff; }
.copy { margin-left: auto; }
```
